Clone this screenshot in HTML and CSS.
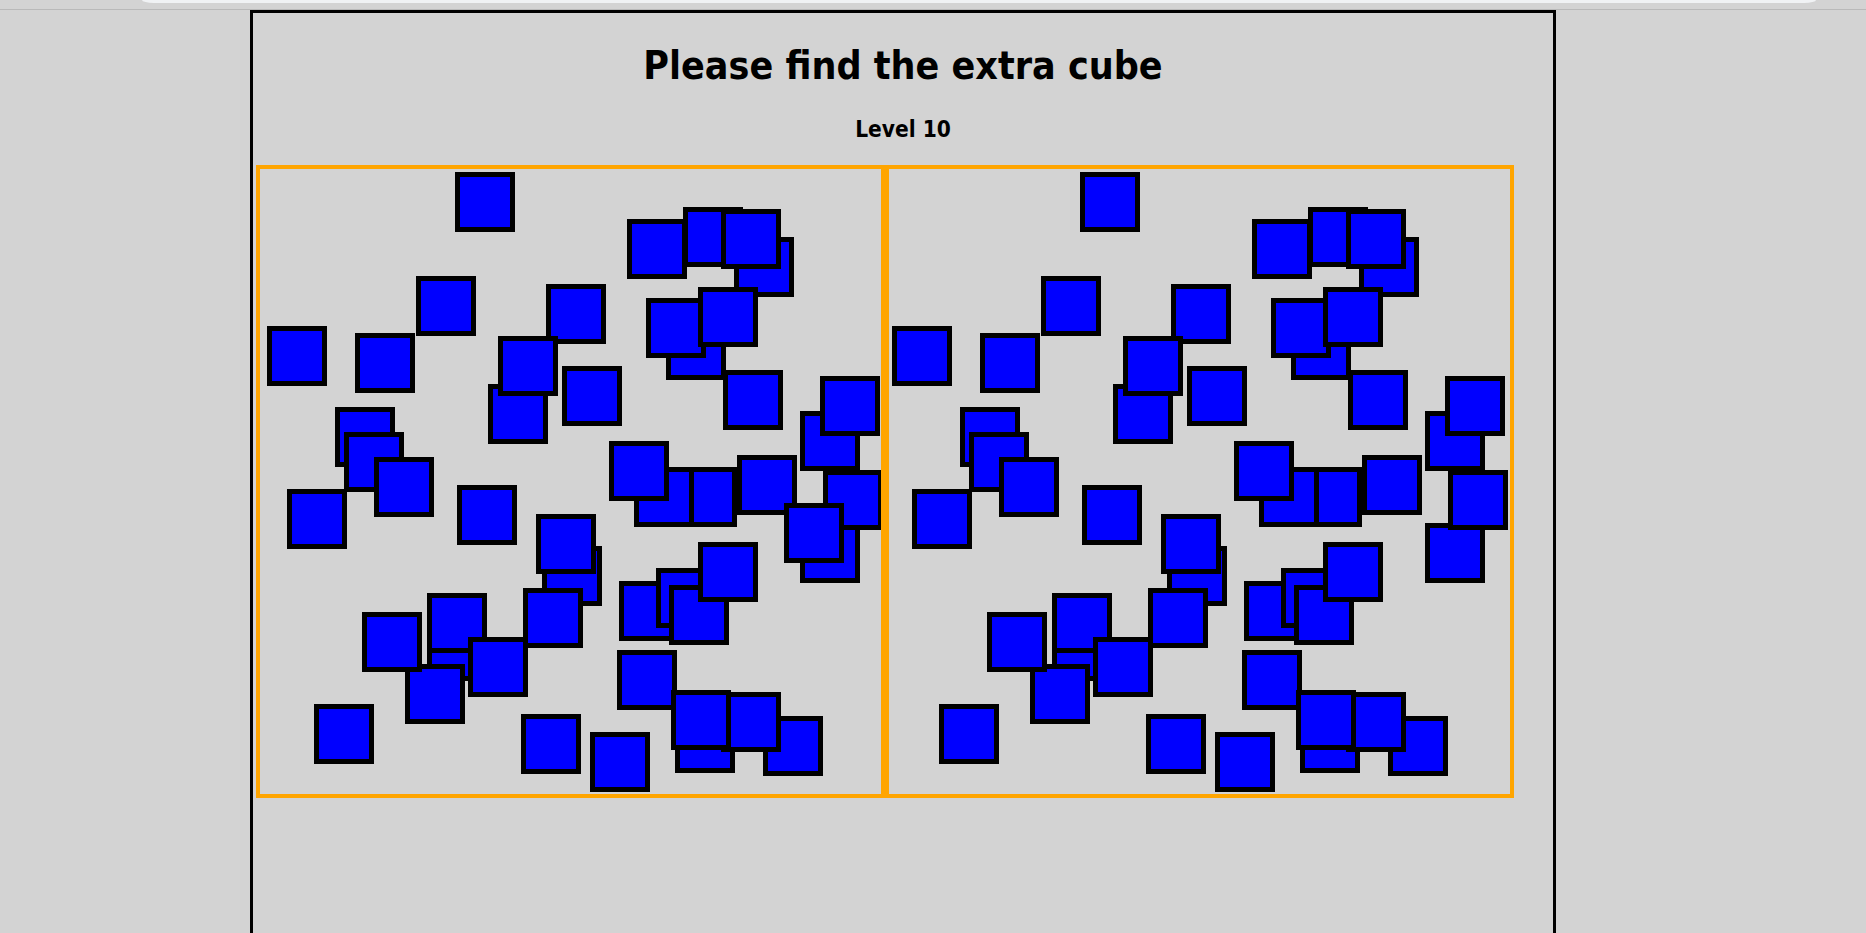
FILE: index.html
```html
<!DOCTYPE html>
<html lang="en">
<head>
<meta charset="utf-8">
<title>Find the extra cube</title>
<link rel="stylesheet" href="styles.css">
</head>
<body>
<div class="topbar"><div class="topbar__pill"></div></div>
<main class="game">
  <h1 class="game__title">Please find the extra cube</h1>
  <h2 class="game__level">Level 10</h2>
  <div class="boards">
    <div class="board">
      <div class="field">
        <div class="cube" style="left:195px;top:3px"></div>
        <div class="cube" style="left:156px;top:107px"></div>
        <div class="cube" style="left:286px;top:115px"></div>
        <div class="cube" style="left:7px;top:157px"></div>
        <div class="cube" style="left:95px;top:164px"></div>
        <div class="cube" style="left:228px;top:215px"></div>
        <div class="cube" style="left:238px;top:167px"></div>
        <div class="cube" style="left:302px;top:197px"></div>
        <div class="cube" style="left:75px;top:238px"></div>
        <div class="cube" style="left:84px;top:263px"></div>
        <div class="cube" style="left:114px;top:288px"></div>
        <div class="cube" style="left:367px;top:50px"></div>
        <div class="cube" style="left:423px;top:38px"></div>
        <div class="cube" style="left:474px;top:68px"></div>
        <div class="cube" style="left:461px;top:40px"></div>
        <div class="cube" style="left:406px;top:151px"></div>
        <div class="cube" style="left:386px;top:129px"></div>
        <div class="cube" style="left:438px;top:118px"></div>
        <div class="cube" style="left:463px;top:201px"></div>
        <div class="cube" style="left:540px;top:242px"></div>
        <div class="cube" style="left:560px;top:207px"></div>
        <div class="cube" style="left:417px;top:298px"></div>
        <div class="cube" style="left:374px;top:298px"></div>
        <div class="cube" style="left:349px;top:272px"></div>
        <div class="cube" style="left:477px;top:286px"></div>
        <div class="cube" style="left:540px;top:354px"></div>
        <div class="cube" style="left:563px;top:301px"></div>
        <div class="cube" style="left:524px;top:334px"></div>
        <div class="cube" style="left:27px;top:320px"></div>
        <div class="cube" style="left:197px;top:316px"></div>
        <div class="cube" style="left:282px;top:377px"></div>
        <div class="cube" style="left:276px;top:345px"></div>
        <div class="cube" style="left:263px;top:419px"></div>
        <div class="cube" style="left:167px;top:452px"></div>
        <div class="cube" style="left:167px;top:424px"></div>
        <div class="cube" style="left:208px;top:468px"></div>
        <div class="cube" style="left:145px;top:495px"></div>
        <div class="cube" style="left:102px;top:443px"></div>
        <div class="cube" style="left:54px;top:535px"></div>
        <div class="cube" style="left:261px;top:545px"></div>
        <div class="cube" style="left:359px;top:412px"></div>
        <div class="cube" style="left:396px;top:399px"></div>
        <div class="cube" style="left:409px;top:416px"></div>
        <div class="cube" style="left:438px;top:373px"></div>
        <div class="cube" style="left:357px;top:481px"></div>
        <div class="cube" style="left:415px;top:544px"></div>
        <div class="cube" style="left:503px;top:547px"></div>
        <div class="cube" style="left:461px;top:523px"></div>
        <div class="cube" style="left:411px;top:521px"></div>
        <div class="cube" style="left:330px;top:563px"></div>
      </div>
    </div>
    <div class="board">
      <div class="field field--shifted">
        <div class="cube" style="left:195px;top:3px"></div>
        <div class="cube" style="left:156px;top:107px"></div>
        <div class="cube" style="left:286px;top:115px"></div>
        <div class="cube" style="left:7px;top:157px"></div>
        <div class="cube" style="left:95px;top:164px"></div>
        <div class="cube" style="left:228px;top:215px"></div>
        <div class="cube" style="left:238px;top:167px"></div>
        <div class="cube" style="left:302px;top:197px"></div>
        <div class="cube" style="left:75px;top:238px"></div>
        <div class="cube" style="left:84px;top:263px"></div>
        <div class="cube" style="left:114px;top:288px"></div>
        <div class="cube" style="left:367px;top:50px"></div>
        <div class="cube" style="left:423px;top:38px"></div>
        <div class="cube" style="left:474px;top:68px"></div>
        <div class="cube" style="left:461px;top:40px"></div>
        <div class="cube" style="left:406px;top:151px"></div>
        <div class="cube" style="left:386px;top:129px"></div>
        <div class="cube" style="left:438px;top:118px"></div>
        <div class="cube" style="left:463px;top:201px"></div>
        <div class="cube" style="left:540px;top:242px"></div>
        <div class="cube" style="left:560px;top:207px"></div>
        <div class="cube" style="left:417px;top:298px"></div>
        <div class="cube" style="left:374px;top:298px"></div>
        <div class="cube" style="left:349px;top:272px"></div>
        <div class="cube" style="left:477px;top:286px"></div>
        <div class="cube" style="left:540px;top:354px"></div>
        <div class="cube" style="left:563px;top:301px"></div>
        <div class="cube" style="left:27px;top:320px"></div>
        <div class="cube" style="left:197px;top:316px"></div>
        <div class="cube" style="left:282px;top:377px"></div>
        <div class="cube" style="left:276px;top:345px"></div>
        <div class="cube" style="left:263px;top:419px"></div>
        <div class="cube" style="left:167px;top:452px"></div>
        <div class="cube" style="left:167px;top:424px"></div>
        <div class="cube" style="left:208px;top:468px"></div>
        <div class="cube" style="left:145px;top:495px"></div>
        <div class="cube" style="left:102px;top:443px"></div>
        <div class="cube" style="left:54px;top:535px"></div>
        <div class="cube" style="left:261px;top:545px"></div>
        <div class="cube" style="left:359px;top:412px"></div>
        <div class="cube" style="left:396px;top:399px"></div>
        <div class="cube" style="left:409px;top:416px"></div>
        <div class="cube" style="left:438px;top:373px"></div>
        <div class="cube" style="left:357px;top:481px"></div>
        <div class="cube" style="left:415px;top:544px"></div>
        <div class="cube" style="left:503px;top:547px"></div>
        <div class="cube" style="left:461px;top:523px"></div>
        <div class="cube" style="left:411px;top:521px"></div>
        <div class="cube" style="left:330px;top:563px"></div>
      </div>
    </div>
  </div>
</main>
</body>
</html>
```
FILE: styles.css
```css
html, body {
  margin: 0;
  padding: 0;
  background: #d3d3d3;
}

body {
  font-family: "DejaVu Sans Condensed", "DejaVu Sans", Verdana, sans-serif;
  color: #000;
  overflow: hidden;
}

.topbar {
  height: 9px;
  border-bottom: 1px solid #b9b9b9;
  background: #d3d3d3;
}

.topbar__pill {
  margin-left: 142px;
  width: 1674px;
  height: 3px;
  background: #f0f2f4;
  border-radius: 0 0 12px 12px / 0 0 3px 3px;
}

.game {
  box-sizing: border-box;
  width: 1306px;
  min-height: calc(100vh - 10px);
  margin-left: 250px;
  padding-top: 30px;
  border: 3px solid #000;
  border-bottom: none;
}

.game__title {
  margin: 0;
  font-size: 39px;
  line-height: 46px;
  font-weight: bold;
  font-stretch: condensed;
  text-align: center;
}

.game__level {
  margin: 27px 0 0;
  font-size: 22.5px;
  line-height: 26px;
  font-weight: bold;
  font-stretch: condensed;
  text-align: center;
}

.boards {
  display: flex;
  margin: 23px 0 0 3px;
}

.board {
  box-sizing: border-box;
  position: relative;
  width: 629px;
  height: 633px;
  border: 4px solid #ffa500;
  overflow: hidden;
}

.field {
  position: absolute;
  top: 0;
  right: 0;
  bottom: 0;
  left: 0;
}

.field--shifted {
  left: -4px;
}

.cube {
  box-sizing: border-box;
  position: absolute;
  width: 60px;
  height: 60px;
  background: #0000ff;
  border: 5px solid #000;
}
```
